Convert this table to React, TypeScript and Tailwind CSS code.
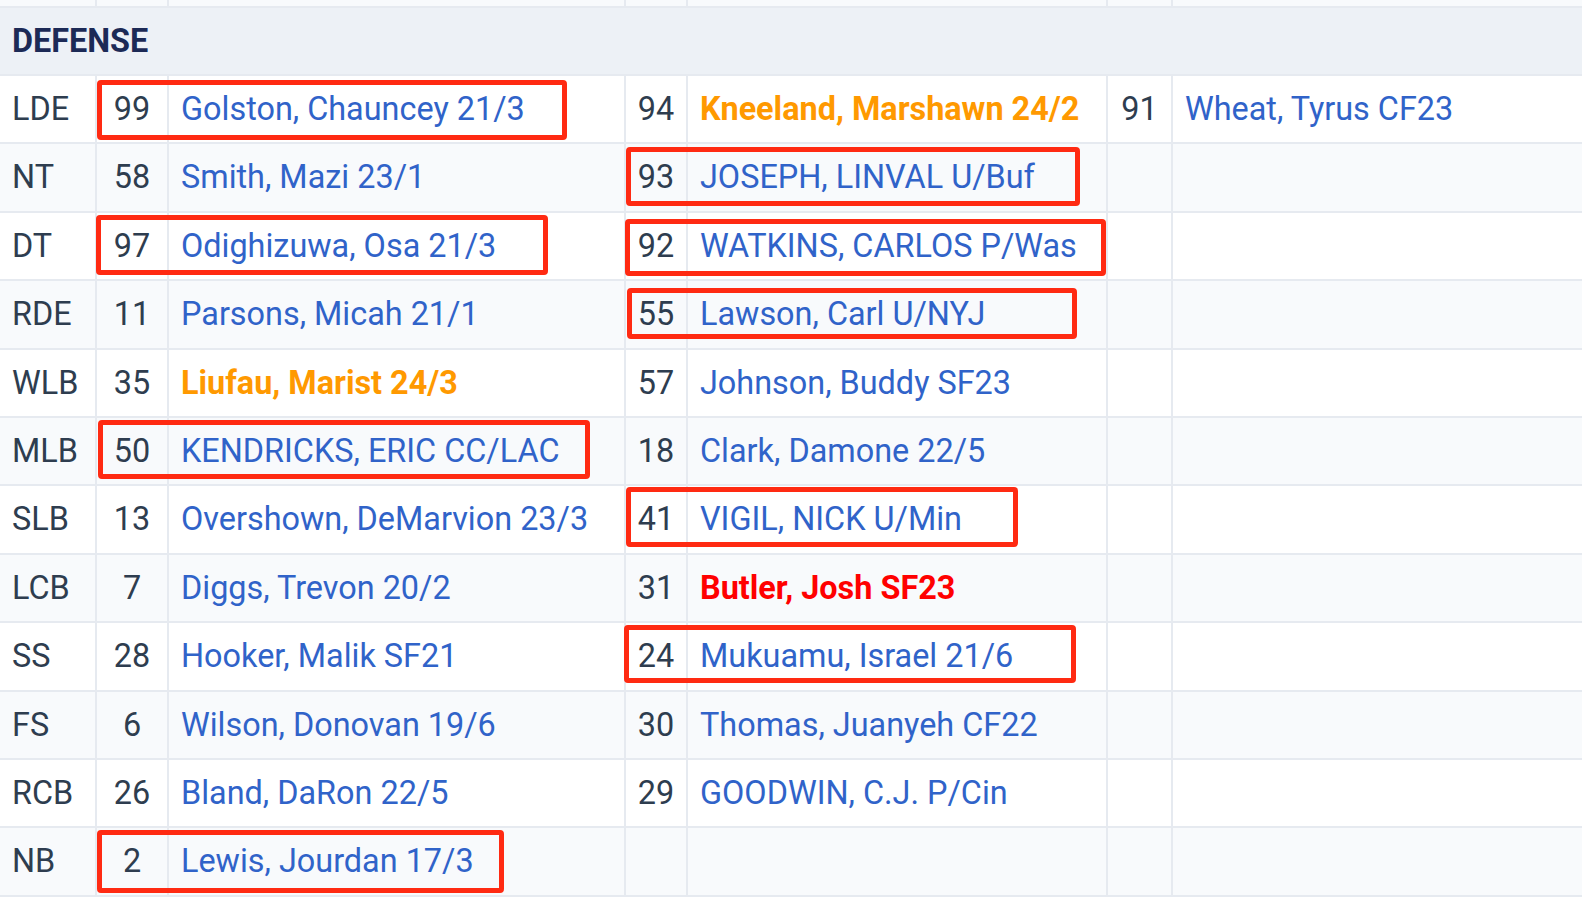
import React from 'react';

type Player = { num: string; name: string; tone?: 'orange' | 'red' };

type Row = {
  pos: string;
  a?: Player;
  b?: Player;
  c?: Player;
};

const ROWS: Row[] = [
  { pos: 'LDE', a: { num: '99', name: 'Golston, Chauncey 21/3' }, b: { num: '94', name: 'Kneeland, Marshawn 24/2', tone: 'orange' }, c: { num: '91', name: 'Wheat, Tyrus CF23' } },
  { pos: 'NT', a: { num: '58', name: 'Smith, Mazi 23/1' }, b: { num: '93', name: 'JOSEPH, LINVAL U/Buf' } },
  { pos: 'DT', a: { num: '97', name: 'Odighizuwa, Osa 21/3' }, b: { num: '92', name: 'WATKINS, CARLOS P/Was' } },
  { pos: 'RDE', a: { num: '11', name: 'Parsons, Micah 21/1' }, b: { num: '55', name: 'Lawson, Carl U/NYJ' } },
  { pos: 'WLB', a: { num: '35', name: 'Liufau, Marist 24/3', tone: 'orange' }, b: { num: '57', name: 'Johnson, Buddy SF23' } },
  { pos: 'MLB', a: { num: '50', name: 'KENDRICKS, ERIC CC/LAC' }, b: { num: '18', name: 'Clark, Damone 22/5' } },
  { pos: 'SLB', a: { num: '13', name: 'Overshown, DeMarvion 23/3' }, b: { num: '41', name: 'VIGIL, NICK U/Min' } },
  { pos: 'LCB', a: { num: '7', name: 'Diggs, Trevon 20/2' }, b: { num: '31', name: 'Butler, Josh SF23', tone: 'red' } },
  { pos: 'SS', a: { num: '28', name: 'Hooker, Malik SF21' }, b: { num: '24', name: 'Mukuamu, Israel 21/6' } },
  { pos: 'FS', a: { num: '6', name: 'Wilson, Donovan 19/6' }, b: { num: '30', name: 'Thomas, Juanyeh CF22' } },
  { pos: 'RCB', a: { num: '26', name: 'Bland, DaRon 22/5' }, b: { num: '29', name: 'GOODWIN, C.J. P/Cin' } },
  { pos: 'NB', a: { num: '2', name: 'Lewis, Jourdan 17/3' } },
];

// highlight boxes drawn over the table
const MARKS = [
  'left-[97px] top-[80px] w-[470px] h-[60px]',
  'left-[626px] top-[147px] w-[454px] h-[59px]',
  'left-[96px] top-[215px] w-[452px] h-[60px]',
  'left-[625px] top-[219px] w-[481px] h-[57px]',
  'left-[627px] top-[288px] w-[450px] h-[51px]',
  'left-[98px] top-[420px] w-[492px] h-[59px]',
  'left-[626px] top-[487px] w-[392px] h-[60px]',
  'left-[624px] top-[625px] w-[452px] h-[58px]',
  'left-[97px] top-[830px] w-[407px] h-[63px]',
];

const GRID = 'grid grid-cols-[95px_72px_457px_62px_420px_65px_1fr]';
const CELL = 'flex items-center border-l-2 border-[#e6eaf0]';

const nameColor = (p: Player) => {
  if (p.tone === 'orange') return 'text-[#ff9900] font-bold';
  if (p.tone === 'red') return 'text-[#ff0000] font-bold';
  return 'text-[#3063c9]';
};

const Slot = ({ p }: { p?: Player }) => (
  <>
    <div className={`${CELL} justify-center text-[#2e3d4f]`}>{p?.num}</div>
    <div className={`${CELL} px-3 whitespace-nowrap`}>
      {p && <span className={nameColor(p)}>{p.name}</span>}
    </div>
  </>
);

export default function App() {
  return (
    <div className="relative w-[1582px] h-[898px] overflow-hidden bg-white text-[32.4px] leading-none" style={{ fontFamily: 'Roboto, "Liberation Sans", sans-serif' }}>
      <div className={`${GRID} h-[8px] bg-[#f8fafc] border-b-2 border-[#e6eaf0]`}>
        <div />
        <div className={CELL} />
        <div className={CELL} />
        <div className={CELL} />
        <div className={CELL} />
        <div className={CELL} />
        <div className={CELL} />
      </div>

      <div className="flex items-center h-[68px] pl-3 bg-[#edf1f6] border-b-2 border-[#e6eaf0]">
        <span className="text-[32.4px] font-bold text-[#1c2a56]">DEFENSE</span>
      </div>

      {ROWS.map((r, i) => (
        <div
          key={r.pos}
          className={`${GRID} h-[68.4px] border-b-2 border-[#e6eaf0] ${i % 2 === 1 ? 'bg-[#f8fafc]' : 'bg-white'}`}
        >
          <div className="flex items-center pl-3 text-[#2e3d4f]">{r.pos}</div>
          <Slot p={r.a} />
          <Slot p={r.b} />
          <Slot p={r.c} />
        </div>
      ))}

      {MARKS.map((m) => (
        <div key={m} className={`absolute ${m} border-[5px] border-[#ff2a12] rounded-[4px] pointer-events-none`} />
      ))}
    </div>
  );
}
